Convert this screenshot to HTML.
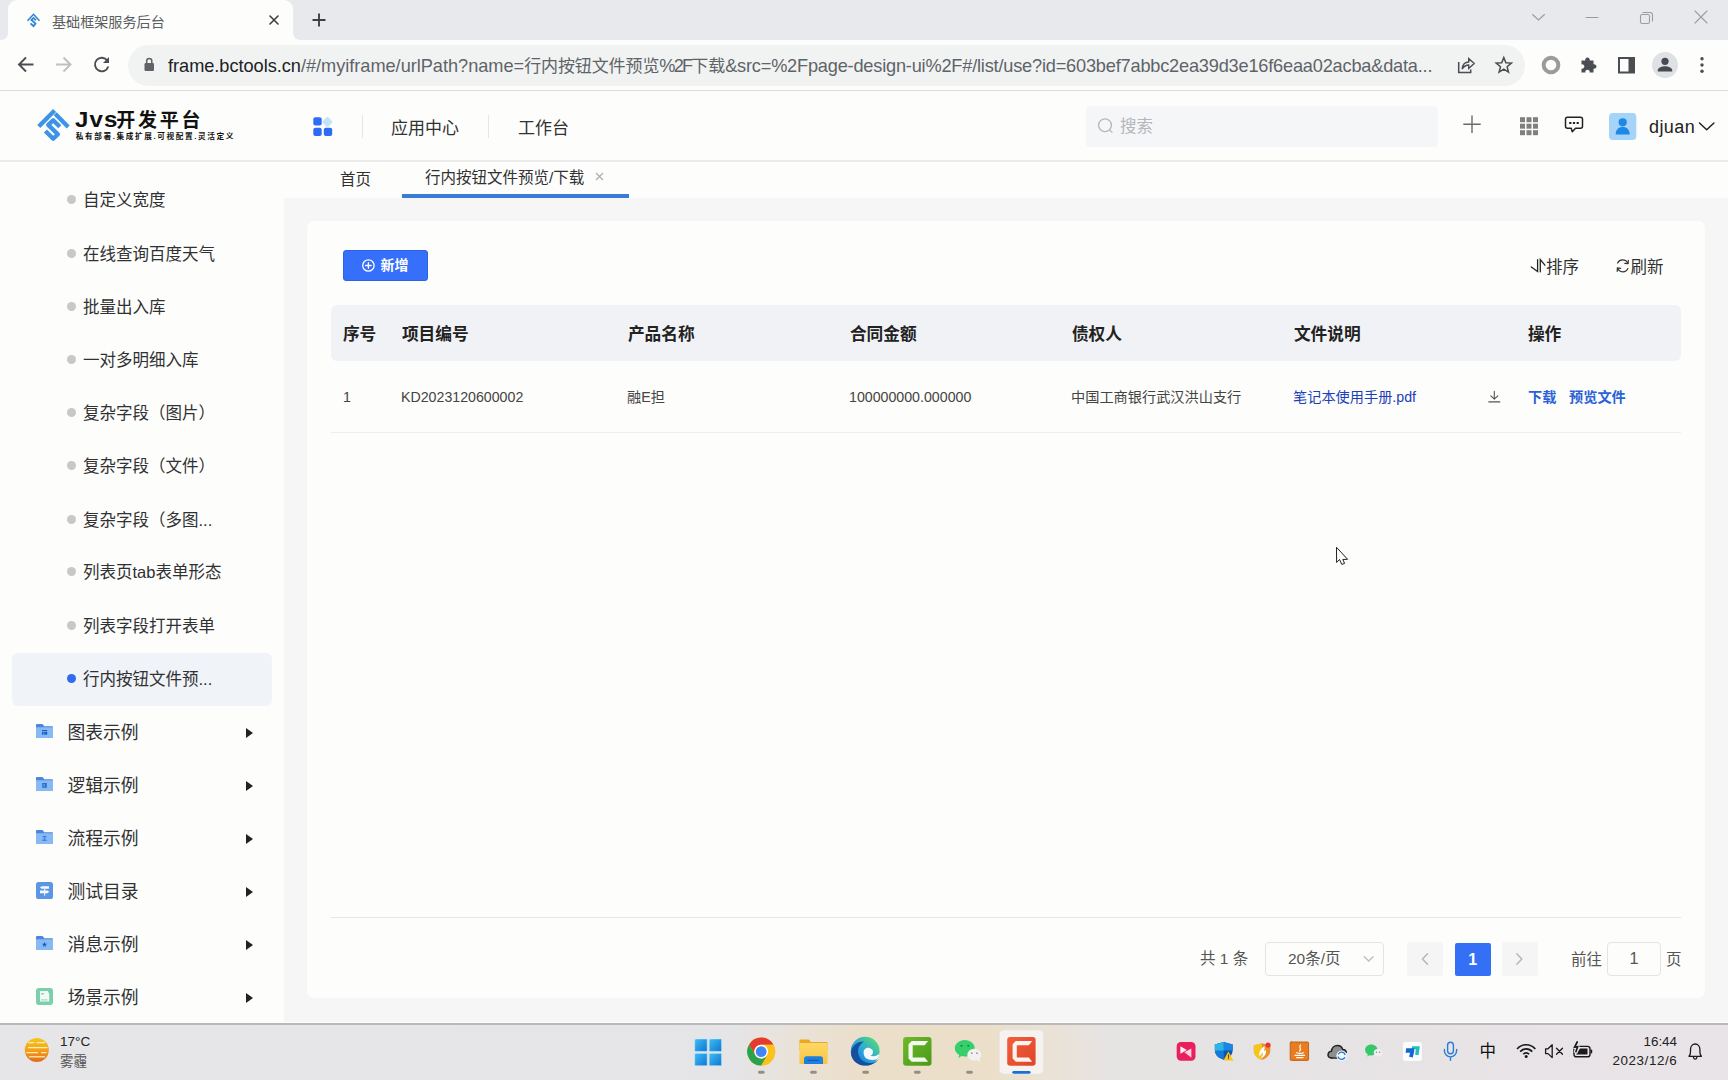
<!DOCTYPE html>
<html lang="zh-CN">
<head>
<meta charset="utf-8">
<title>基础框架服务后台</title>
<style>
*{box-sizing:border-box;margin:0;padding:0}
html,body{width:1728px;height:1080px;overflow:hidden;background:#fdfdfb;font-family:"Liberation Sans","Noto Sans CJK SC",sans-serif;color:#333}
.abs{position:absolute}
#root{position:relative;width:1728px;height:1080px;overflow:hidden}
/* chrome */
#tabstrip{left:0;top:0;width:1728px;height:40px;background:#e8e9ed}
#tab{left:8px;top:0;width:285px;height:41px;background:#fdfdfb;border-radius:9px 9px 0 0}
#tabtitle{left:52px;top:10.5px;font-size:14.1px;color:#5b5e62;white-space:nowrap;letter-spacing:0}
#toolbar{left:0;top:40px;width:1728px;height:51px;background:#fdfdfb;border-bottom:1px solid #dcdcdc}
#omni{left:128px;top:45px;width:1397px;height:41px;border-radius:20.5px;background:#f1f3f3}
#url{left:168px;top:55px;font-size:18.2px;color:#5f6368;white-space:nowrap;letter-spacing:-.03px;line-height:22px}
#url .p{letter-spacing:-1.8px}
#url .r{letter-spacing:-.2px}
#url .c{font-size:17px;letter-spacing:-.1px}
#url .d{color:#202124}
/* app header */
#apphead{left:0;top:91px;width:1728px;height:71px;background:#fdfdfb;border-bottom:2px solid #ebebeb}
.nav{top:116.6px;font-size:17px;color:#303133;white-space:nowrap;line-height:24px}
.vsep{top:115px;width:1px;height:23px;background:#e6e6e6}
#search{left:1086px;top:106px;width:352px;height:41px;background:#f5f6f7;border-radius:4px}
#search span{position:absolute;left:34px;top:9px;font-size:16.5px;color:#b4b7bd;line-height:22px}
#user{left:1649px;top:115px;font-size:18px;color:#222;line-height:24px;letter-spacing:.4px}
/* sidebar */
#side{left:0;top:162px;width:284px;height:861px;background:#fdfdfb}
.mi{left:83px;font-size:16.5px;color:#303133;white-space:nowrap;line-height:24px}
.dot{left:67px;width:9px;height:9px;border-radius:50%;background:#c8c8c8}
.grp{left:67.4px;font-size:17.8px;color:#303133;white-space:nowrap;line-height:24px}
.arrow{left:246px;width:0;height:0;border-left:7px solid #222;border-top:5px solid transparent;border-bottom:5px solid transparent}
#active{left:12px;top:653px;width:260px;height:52.5px;background:#f0f3f8;border-radius:6px}
/* main */
#main{left:284px;top:198px;width:1444px;height:823.5px;background:#f6f6f6}
#tabsbar{left:284px;top:162px;width:1444px;height:36px;background:#fdfdfb}
#card{left:307px;top:221px;width:1398px;height:777.3px;background:#fdfdfb;border-radius:7px}
#addbtn{left:343px;top:250px;width:84.5px;height:31px;background:#356ffa;border:1px solid #2c62e4;border-radius:3px;color:#fff;font-weight:bold;font-size:14px}
#thead{left:331px;top:305px;width:1350px;height:56px;background:#f1f2f5;border-radius:6px}
.th{margin-left:.9px;top:323.5px;font-size:16.7px;font-weight:bold;color:#222;white-space:nowrap;line-height:22px}
.td{top:387px;font-size:14.2px;color:#444;white-space:nowrap;line-height:20px}
.link{color:#1c3fb8}
.op{color:#2a62d8;font-weight:bold}
.hline{height:1px;background:#ebebeb}
.pg{font-size:15.5px;color:#555;white-space:nowrap;line-height:22px}
/* taskbar */
#taskbar{left:0;top:1023px;width:1728px;height:57px;background:linear-gradient(90deg,#e6e6e9 0,#e5e4e6 735px,#e9e2d7 800px,#ecdfca 860px,#ecdfca 990px,#eae2d6 1050px,#e6e3e3 1110px,#e8e4e8 1728px);border-top:2px solid #b9b9bb}
.tb{font-size:13.5px;color:#222;white-space:nowrap;line-height:18px}
</style>
</head>
<body>
<div id="root">

<!-- ===== Browser chrome ===== -->
<div id="tabstrip" class="abs"></div>
<div id="tab" class="abs"></div>
<div id="tabtitle" class="abs">基础框架服务后台</div>
<div id="toolbar" class="abs"></div>
<div id="omni" class="abs"></div>
<div id="url" class="abs"><span class="d">frame.bctools.cn</span>/#/myiframe/urlPath?name=<span class="c">行内按钮文件预览</span><span class="p">%2F</span><span class="c">下载</span><span class="r">&amp;src=%2Fpage-design-ui%2F#/list/use?id=603bef7abbc2ea39d3e16f6eaa02acba&amp;data...</span></div>


<svg class="abs" style="left:0;top:0" width="1728" height="91" viewBox="0 0 1728 91" fill="none" stroke-linecap="round" stroke-linejoin="round">
<!-- tab curves -->
<path d="M0 40 Q8 40 8 32 L8 40Z" fill="#fdfdfb" stroke="none"/>
<path d="M301 40 Q293 40 293 32 L293 40Z" fill="#fdfdfb" stroke="none"/>
<!-- favicon -->
<g stroke="#2f86d6" stroke-linecap="butt" stroke-linejoin="miter">
<path d="M27.5 20.7 L33.5 14.3 L39.5 20.7" stroke-width="1.6"/>
<path d="M35.9 20.3 L33.5 17.9 L31.4 20 L35.5 23.6 L33.5 26.1 L30.5 23.3" stroke-width="1.8"/>
</g>
<!-- tab close -->
<path d="M270 16 L278 24 M278 16 L270 24" stroke="#3c4043" stroke-width="1.6"/>
<!-- new tab -->
<path d="M312.5 20 H325.5 M319 13.5 V26.5" stroke="#3c4043" stroke-width="1.9" stroke-linecap="butt"/>
<!-- window controls -->
<path d="M1532.5 14.5 L1538.5 20 L1544.5 14.5" stroke="#9a9da2" stroke-width="1.1"/>
<path d="M1586 17.5 H1598" stroke="#9a9da2" stroke-width="1.1"/>
<rect x="1640.5" y="14.5" width="9" height="9" rx="1.8" stroke="#9a9da2" stroke-width="1.1"/>
<path d="M1643 12.5 H1650 Q1652.5 12.5 1652.5 15 V21" stroke="#9a9da2" stroke-width="1.1"/>
<path d="M1695 11 L1707 23 M1707 11 L1695 23" stroke="#9a9da2" stroke-width="1.1"/>
<!-- back -->
<path d="M33.5 64.5 H19.5 M26 57.5 L19 64.5 L26 71.5" stroke="#4a4d51" stroke-width="1.9" stroke-linecap="butt" stroke-linejoin="miter"/>
<!-- forward -->
<path d="M56 64.5 H70 M63.5 57.5 L70.5 64.5 L63.5 71.5" stroke="#bdc1c6" stroke-width="1.9" stroke-linecap="butt" stroke-linejoin="miter"/>
<!-- reload -->
<path d="M107.3 60.5 A6.8 6.8 0 1 0 108.3 66.5" stroke="#4a4d51" stroke-width="1.9" stroke-linecap="butt"/>
<path d="M109 57 V63 H103 Z" fill="#4a4d51" stroke="none"/>
<!-- lock -->
<rect x="144.5" y="63" width="9.5" height="8" rx="1.2" fill="#5f6368" stroke="none"/>
<path d="M146.7 63 V61 A2.550 2.550 0 0 1 151.8 61 V63" stroke="#5f6368" stroke-width="1.5"/>
<!-- share -->
<g transform="translate(-1.3 0)"><path d="M1460 62 V72.5 H1472 V69.5" stroke="#4a4d51" stroke-width="1.5" stroke-linejoin="miter" stroke-linecap="butt"/>
<path d="M1463.5 69 C1464 64 1467 62 1470 62 V58.5 L1475.5 63.5 L1470 68.5 V65 C1467.5 65 1465.5 66 1463.5 69Z" stroke="#4a4d51" stroke-width="1.4" stroke-linejoin="miter"/></g>
<!-- star -->
<path d="M1503.8 57.6 L1505.9 62.8 L1511.4 63.1 L1507.1 66.7 L1508.5 72.1 L1503.8 69.1 L1499.1 72.1 L1500.5 66.7 L1496.2 63.1 L1501.7 62.8 Z" stroke="#4a4d51" stroke-width="1.5" stroke-linejoin="miter"/>
<!-- ext ring -->
<circle cx="1551" cy="65" r="7.3" stroke="#9b9b9b" stroke-width="4"/>
<!-- puzzle -->
<path d="M1581.5 60.5 H1585.3 A2.3 2.3 0 1 1 1589.7 60.5 H1593.5 V64.3 A2.3 2.3 0 1 1 1593.5 68.7 V72.5 H1589.6 A2.2 2.2 0 1 0 1585.4 72.5 H1581.5 V68.6 A2.2 2.2 0 1 0 1581.5 64.4 Z" fill="#4a4d51" stroke="none"/>
<!-- side panel -->
<rect x="1619" y="58" width="15" height="14.5" stroke="#4a4d51" stroke-width="2" stroke-linejoin="miter"/>
<rect x="1628.5" y="58" width="5.5" height="14.5" fill="#4a4d51" stroke="none"/>
<!-- profile -->
<circle cx="1665" cy="65" r="13" fill="#dfe1e5" stroke="none"/>
<circle cx="1665" cy="61.3" r="3.6" fill="#454a54" stroke="none"/>
<path d="M1657.8 71.5 V70.3 C1657.8 67.6 1662.5 66.3 1665 66.3 C1667.5 66.3 1672.2 67.6 1672.2 70.3 V71.5 Z" fill="#454a54" stroke="none"/>
<!-- menu -->
<circle cx="1702" cy="58.7" r="1.7" fill="#4a4d51" stroke="none"/>
<circle cx="1702" cy="65" r="1.7" fill="#4a4d51" stroke="none"/>
<circle cx="1702" cy="71.3" r="1.7" fill="#4a4d51" stroke="none"/>
</svg>

<!-- ===== App header ===== -->
<div id="apphead" class="abs"></div>
<div class="abs nav" style="left:391px">应用中心</div>
<div class="abs nav" style="left:518px">工作台</div>
<div class="abs vsep" style="left:362px"></div>
<div class="abs vsep" style="left:488px"></div>
<div id="search" class="abs"><span>搜索</span></div>
<div id="user" class="abs">djuan</div>


<svg class="abs" style="left:0;top:91px" width="1728" height="70" viewBox="0 91 1728 70" fill="none">
<!-- logo -->
<g stroke="#3d93e8" stroke-width="4.3" stroke-linejoin="round" stroke-linecap="butt">
<path d="M38.8 126.6 L54.6 110.4"/>
<path d="M55.2 113.8 L68.2 126.9"/>
<path d="M59.8 126.8 L53.2 120.2 L48.2 124.9 L57.9 134.2 L53.2 138.7 L45.4 131"/>
</g>
<!-- app grid -->
<rect x="313.3" y="117.2" width="8.4" height="8.4" rx="2" fill="#2f6cf6"/>
<rect x="313.3" y="127.8" width="8.4" height="8.2" rx="2" fill="#2f6cf6"/>
<rect x="323.8" y="127.8" width="8.4" height="8.2" rx="2" fill="#2f6cf6"/>
<rect x="323.4" y="117.9" width="8" height="8" rx="2" fill="#c6e2f8" transform="rotate(45 327.4 121.9)"/>
<!-- search icon -->
<circle cx="1105" cy="125.2" r="6.4" stroke="#b4b7bd" stroke-width="1.3"/>
<path d="M1109.6 129.9 L1112 132.4" stroke="#b4b7bd" stroke-width="1.3" stroke-linecap="round"/>
<!-- plus -->
<path d="M1463.3 124.2 H1480.7 M1472 115.5 V132.9" stroke="#6b6b6b" stroke-width="1.4"/>
<!-- 3x3 grid -->
<g fill="#808080">
<rect x="1520" y="117.2" width="5" height="5"/><rect x="1526.5" y="117.2" width="5" height="5"/><rect x="1533" y="117.2" width="5" height="5"/>
<rect x="1520" y="123.7" width="5" height="5"/><rect x="1526.5" y="123.7" width="5" height="5"/><rect x="1533" y="123.7" width="5" height="5"/>
<rect x="1520" y="130.2" width="5" height="5"/><rect x="1526.5" y="130.2" width="5" height="5"/><rect x="1533" y="130.2" width="5" height="5"/>
</g>
<!-- chat -->
<path d="M1567.5 117.3 H1580.5 Q1582.5 117.3 1582.5 119.3 V126.3 Q1582.5 128.3 1580.5 128.3 H1575.5 L1572.3 131.8 L1571.2 128.3 H1567.5 Q1565.5 128.3 1565.5 126.3 V119.3 Q1565.5 117.3 1567.5 117.3 Z" stroke="#222" stroke-width="1.5" stroke-linejoin="round"/>
<rect x="1569.2" y="122" width="2.2" height="2" fill="#222"/><rect x="1572.9" y="122" width="2.2" height="2" fill="#222"/><rect x="1576.6" y="122" width="2.2" height="2" fill="#222"/>
<!-- avatar -->
<rect x="1609" y="113" width="27.3" height="27" rx="4" fill="#a6d3f8"/>
<circle cx="1622.7" cy="122.3" r="4.1" fill="#1e88e5"/>
<path d="M1615.7 134.5 C1615.7 129.5 1618.5 127 1622.7 127 C1626.9 127 1629.7 129.5 1629.7 134.5 Z" fill="#1e88e5"/>
<!-- chevron -->
<path d="M1699.5 123 L1706.7 129.8 L1713.9 123" stroke="#222" stroke-width="1.5" stroke-linecap="round" stroke-linejoin="round"/>
</svg>
<div class="abs" style="left:75.3px;top:106.6px;font-weight:bold;white-space:nowrap;line-height:26px;color:#111;font-size:21.5px;letter-spacing:1px;transform:scaleX(1.12);transform-origin:0 0">Jvs</div>
<div class="abs" style="left:116.3px;top:107.6px;font-weight:bold;white-space:nowrap;line-height:26px;color:#111;font-size:19px;letter-spacing:2.7px">开发平台</div>
<div class="abs" style="left:75.8px;top:130.6px;font-weight:bold;white-space:nowrap;line-height:12px;font-size:7.6px;letter-spacing:1.65px;color:#111">私有部署.集成扩展.可视配置.灵活定义</div>

<!-- ===== Sidebar ===== -->
<div id="side" class="abs"></div>
<div id="active" class="abs"></div>
<div class="abs dot" style="top:195px;background:#c8c8c8"></div><div class="abs mi" style="top:188px">自定义宽度</div>
<div class="abs dot" style="top:249px;background:#c8c8c8"></div><div class="abs mi" style="top:242px">在线查询百度天气</div>
<div class="abs dot" style="top:302px;background:#c8c8c8"></div><div class="abs mi" style="top:295px">批量出入库</div>
<div class="abs dot" style="top:355px;background:#c8c8c8"></div><div class="abs mi" style="top:348px">一对多明细入库</div>
<div class="abs dot" style="top:408px;background:#c8c8c8"></div><div class="abs mi" style="top:401px">复杂字段（图片）</div>
<div class="abs dot" style="top:461px;background:#c8c8c8"></div><div class="abs mi" style="top:454px">复杂字段（文件）</div>
<div class="abs dot" style="top:515px;background:#c8c8c8"></div><div class="abs mi" style="top:508px">复杂字段（多图...</div>
<div class="abs dot" style="top:567px;background:#c8c8c8"></div><div class="abs mi" style="top:560px">列表页tab表单形态</div>
<div class="abs dot" style="top:621px;background:#c8c8c8"></div><div class="abs mi" style="top:614px">列表字段打开表单</div>
<div class="abs dot" style="top:674px;background:#2f6bef"></div><div class="abs mi" style="top:667px">行内按钮文件预...</div>
<div class="abs grp" style="top:721px">图表示例</div><div class="abs arrow" style="top:728px"></div>
<div class="abs grp" style="top:774px">逻辑示例</div><div class="abs arrow" style="top:781px"></div>
<div class="abs grp" style="top:827px">流程示例</div><div class="abs arrow" style="top:834px"></div>
<div class="abs grp" style="top:880px">测试目录</div><div class="abs arrow" style="top:887px"></div>
<div class="abs grp" style="top:933px">消息示例</div><div class="abs arrow" style="top:940px"></div>
<div class="abs grp" style="top:986px">场景示例</div><div class="abs arrow" style="top:993px"></div>

<svg class="abs" style="left:0;top:700px" width="284" height="323" viewBox="0 700 284 323" fill="none">
<path d="M36 725 Q36 724 37 724 H42 Q42.8 724 43.2 724.8 L44.2 726.2 H52 Q53 726.2 53 727.2 V737 Q53 738 52 738 H37 Q36 738 36 737 Z" fill="#4a86dc"/><path d="M36 727.2 H53 V737 Q53 738 52 738 H37 Q36 738 36 737 Z" fill="#88b9f5"/><rect x="42" y="730" width="5.2" height="1.3" fill="#1b62c4"/><rect x="42" y="732" width="1.6" height="2.7" fill="#1b62c4"/><rect x="44.2" y="732" width="3" height="2.7" fill="#1b62c4"/>
<path d="M36 778 Q36 777 37 777 H42 Q42.8 777 43.2 777.8 L44.2 779.2 H52 Q53 779.2 53 780.2 V790 Q53 791 52 791 H37 Q36 791 36 790 Z" fill="#4a86dc"/><path d="M36 780.2 H53 V790 Q53 791 52 791 H37 Q36 791 36 790 Z" fill="#88b9f5"/><rect x="42.2" y="783" width="4.6" height="4.8" fill="#2a6fd0"/><rect x="43.6" y="784.2" width="1" height="2.4" fill="#88b9f5"/>
<path d="M36 831 Q36 830 37 830 H42 Q42.8 830 43.2 830.8 L44.2 832.2 H52 Q53 832.2 53 833.2 V843 Q53 844 52 844 H37 Q36 844 36 843 Z" fill="#4a86dc"/><path d="M36 833.2 H53 V843 Q53 844 52 844 H37 Q36 844 36 843 Z" fill="#88b9f5"/><rect x="42.6" y="836" width="3.8" height="1.2" fill="#3c7bd8"/><rect x="43.8" y="837.2" width="1.4" height="2.4" fill="#3c7bd8"/><rect x="42.2" y="839.6" width="4.6" height="1.2" fill="#3c7bd8"/>
<rect x="36" y="882" width="17" height="17" rx="2.6" fill="#5c96e3"/><path d="M41.6 886.2 H49 V888.8 H41.6 L40 887.5 Z M40 890.4 H47.6 L49.2 891.8 L47.6 893.2 H40 Z" fill="#f4fbff"/><rect x="44.2" y="888.5" width="1" height="7.2" fill="#f4fbff"/>
<path d="M36 937 Q36 936 37 936 H42 Q42.8 936 43.2 936.8 L44.2 938.2 H52 Q53 938.2 53 939.2 V949 Q53 950 52 950 H37 Q36 950 36 949 Z" fill="#4a86dc"/><path d="M36 939.2 H53 V949 Q53 950 52 950 H37 Q36 950 36 949 Z" fill="#88b9f5"/><polygon points="44.50,941.70 45.21,943.63 47.26,943.70 45.64,944.97 46.20,946.95 44.50,945.80 42.80,946.95 43.36,944.97 41.74,943.70 43.79,943.63" fill="#1b62c4"/>
<rect x="36" y="988" width="17" height="17" rx="3" fill="#7ccfab"/><path d="M40 991 H47.8 L49.2 994 V1001.6 H40 Z" fill="#effdf8"/><rect x="41.2" y="993" width="2.6" height="1.5" fill="#a8b8b2"/><rect x="41" y="999.3" width="6.5" height="1.2" fill="#b5d2c6"/>
</svg>
<!-- ===== Main ===== -->
<div id="tabsbar" class="abs"></div>
<div id="main" class="abs"></div>
<div id="card" class="abs"></div>
<div id="thead" class="abs"></div>

<div class="abs" style="left:340px;top:169.2px;font-size:15.5px;color:#303133;line-height:22px;white-space:nowrap">首页</div>
<div class="abs" style="left:425px;top:167.2px;font-size:15.5px;color:#303133;line-height:22px;white-space:nowrap">行内按钮文件预览/下载</div>
<svg class="abs" style="left:595px;top:172.4px" width="9" height="9" viewBox="0 0 9 9"><path d="M1 1 L8 8 M8 1 L1 8" stroke="#a8abb2" stroke-width="1.1"/></svg>
<div class="abs" style="left:402px;top:194px;width:227px;height:4px;background:#3a7bd8"></div>

<div id="addbtn" class="abs"><span style="position:absolute;left:36.5px;top:5px;line-height:19px">新增</span></div>
<div class="abs" style="left:1546px;top:256px;font-size:16.5px;color:#303133;line-height:22px;white-space:nowrap">排序</div>
<div class="abs" style="left:1630.5px;top:256px;font-size:16.5px;color:#303133;line-height:22px;white-space:nowrap">刷新</div>
<div class="abs th" style="left:342px">序号</div>
<div class="abs th" style="left:401px">项目编号</div>
<div class="abs th" style="left:627px">产品名称</div>
<div class="abs th" style="left:849px">合同金额</div>
<div class="abs th" style="left:1071px">债权人</div>
<div class="abs th" style="left:1293px">文件说明</div>
<div class="abs th" style="left:1527px">操作</div>
<div class="abs td" style="left:343px">1</div>
<div class="abs td" style="left:401px">KD2023120600002</div>
<div class="abs td" style="left:627px">融E担</div>
<div class="abs td" style="left:849px">100000000.000000</div>
<div class="abs td" style="left:1071px">中国工商银行武汉洪山支行</div>
<div class="abs td link" style="left:1293px">笔记本使用手册.pdf</div>
<div class="abs td op" style="left:1528px">下载</div>
<div class="abs td op" style="left:1569px">预览文件</div>
<div class="abs hline" style="left:331px;top:432px;width:1350px;background:#eee"></div>
<div class="abs hline" style="left:331px;top:917px;width:1350px;background:#e6e6e6"></div>
<div class="abs pg" style="left:1200px;top:948px">共 1 条</div>
<div class="abs" style="left:1265px;top:942px;width:119px;height:34px;border:1px solid #e4e4e4;border-radius:4px"></div>
<div class="abs pg" style="left:1288px;top:948px">20条/页</div>
<div class="abs" style="left:1407px;top:942px;width:36px;height:34px;background:#f5f5f5;border-radius:3px"></div>
<div class="abs" style="left:1455px;top:942.5px;width:35.5px;height:33px;background:#3370f6;border-radius:2px;color:#fff;font-weight:bold;font-size:16px;text-align:center;line-height:33px">1</div>
<div class="abs" style="left:1502px;top:942px;width:36px;height:34px;background:#f5f5f5;border-radius:3px"></div>
<div class="abs pg" style="left:1571px;top:949px">前往</div>
<div class="abs" style="left:1607px;top:942px;width:54px;height:34px;border:1px solid #e4e4e4;border-radius:4px;text-align:center;line-height:32px;font-size:16px;color:#555">1</div>
<div class="abs pg" style="left:1666px;top:949px">页</div>

<svg class="abs" style="left:307px;top:221px" width="1397" height="778" viewBox="307 221 1397 778" fill="none" stroke-linecap="round" stroke-linejoin="round">
<!-- add icon -->
<circle cx="368.4" cy="265.5" r="5.7" stroke="#fff" stroke-width="1.3"/>
<path d="M365.6 265.5 H371.2 M368.4 262.7 V268.3" stroke="#fff" stroke-width="1.3"/>
<!-- sort -->
<path d="M1537.6 259.6 V271.5 L1531.3 267 M1540.3 271.8 V259.6 L1544.9 265.2" stroke="#222" stroke-width="1.3" stroke-linejoin="miter"/>
<!-- refresh -->
<path d="M1627.8 263.3 A5.6 5.6 0 0 0 1617.6 263" stroke="#333" stroke-width="1.2"/>
<path d="M1617.6 268.3 A5.6 5.6 0 0 0 1627.9 268.5" stroke="#333" stroke-width="1.2"/>
<path d="M1628.3 260.3 L1628.1 263.7 L1624.8 263.3" stroke="#333" stroke-width="1.2"/>
<path d="M1617.2 271.3 L1617.4 267.9 L1620.7 268.3" stroke="#333" stroke-width="1.2"/>
<!-- download -->
<path d="M1494.3 391.3 V399 M1490.8 395.8 L1494.3 399.2 L1497.8 395.8 M1488.8 401.9 H1499.8" stroke="#555" stroke-width="1.1"/>
<!-- select chevron -->
<path d="M1364.3 956.8 L1368.7 961 L1373.1 956.8" stroke="#b9bcc2" stroke-width="1.3"/>
<!-- prev / next -->
<path d="M1427.5 953.8 L1422.5 959 L1427.5 964.2" stroke="#b4b6ba" stroke-width="1.5"/>
<path d="M1516.8 953.8 L1521.8 959 L1516.8 964.2" stroke="#b4b6ba" stroke-width="1.5"/>
</svg>
<svg class="abs" style="left:1330px;top:540px" width="24" height="30" viewBox="1330 540 24 30"><path d="M1336.5 547.3 L1336.6 562.5 L1339.5 559.5 L1341.8 564.4 L1344.6 563.4 L1342.8 559.5 L1347.6 559.3 Z" fill="#fdfdfb" stroke="#222" stroke-width="1" stroke-linejoin="round"/></svg>
<!-- ===== Taskbar ===== -->
<div id="taskbar" class="abs"></div>

<svg class="abs" style="left:0;top:1023px" width="1728" height="57" viewBox="0 1023 1728 57" fill="none" stroke-linecap="round" stroke-linejoin="round">
<defs><linearGradient id="gw" x1="0" y1="0" x2="1" y2="1"><stop offset="0" stop-color="#3fbdf2"/><stop offset="1" stop-color="#0f76d4"/></linearGradient><linearGradient id="gsun" x1="0" y1="0" x2="0" y2="1"><stop offset="0" stop-color="#f6c81c"/><stop offset=".5" stop-color="#f3a01c"/><stop offset="1" stop-color="#e6681c"/></linearGradient><linearGradient id="gfold" x1="0" y1="0" x2="0" y2="1"><stop offset="0" stop-color="#fdd867"/><stop offset="1" stop-color="#f8c440"/></linearGradient><linearGradient id="gedge" x1="0" y1="1" x2="1" y2="0"><stop offset="0" stop-color="#1466c4"/><stop offset=".45" stop-color="#2aa3e0"/><stop offset=".85" stop-color="#4fd482"/><stop offset="1" stop-color="#5bd970"/></linearGradient></defs>
<circle cx="36.8" cy="1050" r="12" fill="url(#gsun)"/><g stroke="#fdeeb0" stroke-width="1.3" stroke-linecap="butt"><path d="M28.5 1042.6 H34.5 M36.5 1042.6 H45"/><path d="M28 1047.6 H47.5"/><path d="M26.5 1052.7 H38 M41 1052.7 H46.5"/><path d="M29 1056.8 H45"/></g>
<g fill="url(#gw)" stroke="#c4ebfb" stroke-width=".6"><rect x="694.7" y="1038.9" width="12.5" height="12.5" rx=".8"/><rect x="709.1" y="1038.9" width="12.5" height="12.5" rx=".8"/><rect x="694.7" y="1053.3" width="12.5" height="12.5" rx=".8"/><rect x="709.1" y="1053.3" width="12.5" height="12.5" rx=".8"/></g>
<g transform="translate(761.2 1051.6)"><circle r="14" fill="#fbc116"/><path d="M0 -6.90 L12.18 -6.90 A14 14 0 0 0 -12.07 -7.10 L-5.98 3.45 A6.9 6.9 0 0 1 0 -6.90 Z" fill="#e33b2e"/><path d="M0 -6.90 L12.18 -6.90 A14 14 0 0 0 -12.07 -7.10 L-5.98 3.45 A6.9 6.9 0 0 1 0 -6.90 Z" fill="#fcc21b" transform="rotate(120)"/><path d="M0 -6.90 L12.18 -6.90 A14 14 0 0 0 -12.07 -7.10 L-5.98 3.45 A6.9 6.9 0 0 1 0 -6.90 Z" fill="#2ba24c" transform="rotate(240)"/><circle r="6.9" fill="#fff"/><circle r="5.4" fill="#4285f4"/></g>
<path d="M799.4 1041 Q799.4 1039.6 800.8 1039.6 H808 Q809.2 1039.6 809.8 1040.6 L810.6 1041.9 H826.2 Q827.6 1041.9 827.6 1043.3 V1050 H799.4 Z" fill="#e9a820"/><rect x="799.4" y="1043" width="28.2" height="21.1" rx="1.4" fill="url(#gfold)"/><path d="M804 1064.1 V1059 Q804 1056.2 806.8 1056.2 H820.2 Q823 1056.2 823 1059 V1064.1 Z" fill="#1e7fde"/><path d="M808 1060.4 H818.3" stroke="#125db0" stroke-width="1.3"/>
<circle cx="865.2" cy="1051.2" r="14.4" fill="url(#gedge)"/><path d="M851 1053.5 C851.5 1046 857 1041.5 864 1041.5 C860 1044 857.5 1048 858.2 1053 C859 1059 864 1063.5 871 1063 C874 1062.8 876.5 1061.5 878.2 1059.5 C875.5 1063.5 870.5 1065.6 865.2 1065.6 C858 1065.6 851.5 1060.5 851 1053.5 Z" fill="#14509e"/><path d="M863.6 1052.6 C863.6 1049.4 866.3 1047.4 869.3 1047.9 C872 1048.4 873.5 1050.6 872.9 1052.9 C872.5 1054.3 871.5 1055.1 870.6 1055.7 C873.5 1056.8 877.3 1056 879.3 1053.8 C879.3 1056.3 878.3 1058 876.8 1059.2 C872.8 1060.6 867.3 1060.1 865 1057.2 C864 1055.9 863.6 1054.3 863.6 1052.6 Z" fill="#f4f8fb"/>
<linearGradient id="gcg" x1="0" y1="0" x2="1" y2="1"><stop offset="0" stop-color="#6fb92a"/><stop offset="1" stop-color="#4a9a18"/></linearGradient><rect x="903.1" y="1036.9" width="28.4" height="28.8" rx="3" fill="url(#gcg)"/><path d="M911.7 1041.1000000000001 H928.1 L924.7 1045.3000000000002 H912.7 V1057.5 H924.7 L928.1 1061.7 H911.7 L908.5 1058.5 V1044.3000000000002 Z" fill="#fff" fill-opacity=".93"/>
<path d="M964.8 1039.9 C970.4 1039.9 974.8 1043.6 974.8 1048.2 C974.8 1052.8 970.4 1056.5 964.8 1056.5 C963.7 1056.5 962.6 1056.3 961.6 1056.1 L958.4 1058 L959.2 1054.9 C956.5 1053.4 954.8 1051 954.8 1048.2 C954.8 1043.6 959.2 1039.9 964.8 1039.9 Z" fill="#35d06c"/><circle cx="961.5" cy="1045.8" r="1.1" fill="#1b8a43"/><circle cx="968.3" cy="1045.8" r="1.1" fill="#1b8a43"/><ellipse cx="974.3" cy="1054.7" rx="7" ry="6" fill="#f3f1ef"/><path d="M977 1059.5 L980.2 1062 L979.5 1058.5 Z" fill="#f3f1ef"/><circle cx="971.8" cy="1053.2" r=".9" fill="#9a9a9a"/><circle cx="977" cy="1053.2" r=".9" fill="#9a9a9a"/>
<rect x="999.2" y="1029.8" width="44.5" height="44.5" rx="4.5" fill="#f5f2ef" stroke="#e3e0dc" stroke-width=".8"/>
<linearGradient id="gcr" x1="0" y1="0" x2="1" y2="1"><stop offset="0" stop-color="#f0603a"/><stop offset="1" stop-color="#df452a"/></linearGradient><rect x="1007.2" y="1036.9" width="28.4" height="28.8" rx="3" fill="url(#gcr)"/><path d="M1015.8000000000001 1041.1000000000001 H1032.2 L1028.8 1045.3000000000002 H1016.8000000000001 V1057.5 H1028.8 L1032.2 1061.7 H1015.8000000000001 L1012.6 1058.5 V1044.3000000000002 Z" fill="#fff" fill-opacity=".93"/>
<rect x="758.0" y="1070.8" width="6.6" height="2.9" rx="1.45" fill="#948f86"/><rect x="810.2" y="1070.8" width="6.6" height="2.9" rx="1.45" fill="#948f86"/><rect x="862.4000000000001" y="1070.8" width="6.6" height="2.9" rx="1.45" fill="#948f86"/><rect x="914.0" y="1070.8" width="6.6" height="2.9" rx="1.45" fill="#948f86"/><rect x="966.2" y="1070.8" width="6.6" height="2.9" rx="1.45" fill="#948f86"/><rect x="1012.3" y="1070.9" width="18.3" height="2.9" rx="1.450" fill="#1a6fd4"/>
<rect x="1176.7" y="1042" width="18.8" height="18.8" rx="4.2" fill="#e9205d"/><path d="M1180.4 1046.3 V1053.7 L1186.8 1050 Z" fill="#fff" fill-opacity=".95"/><path d="M1191.4 1048.6 V1057.7 L1184.4 1052.2 Z" fill="#fff" fill-opacity=".8"/>
<path d="M1223.8 1042 L1232.7 1044.6 V1050 C1232.7 1055 1228.8 1058.4 1223.8 1059.7 C1218.8 1058.4 1214.9 1055 1214.9 1050 V1044.6 Z" fill="#0f56a8"/><path d="M1223.8 1042 L1214.9 1044.6 V1050 C1214.9 1055 1218.8 1058.4 1223.8 1059.7 Z" fill="#1579d6"/><path d="M1214.9 1044.6 L1223.8 1042 V1050.6 H1214.9 Z" fill="#2cb5e8"/><path d="M1223.8 1042 L1232.7 1044.6 V1050.6 H1223.8 Z" fill="#1787e2"/><path d="M1228.4 1051.6 L1233.4 1060.6 H1223.4 Z" fill="#fcc419"/><rect x="1228" y="1054.6" width=".9" height="3.2" fill="#333"/><rect x="1228" y="1058.4" width=".9" height=".9" fill="#333"/>
<path d="M1262 1043.3 L1270.3 1045.6 V1050.5 C1270.3 1055 1266.6 1058.5 1262 1059.8 C1257.4 1058.5 1253.8 1055 1253.8 1050.5 V1045.6 Z" fill="#e9922c"/><path d="M1262 1043.3 L1253.8 1045.6 V1050.5 C1253.8 1055 1257.4 1058.5 1262 1059.8 Z" fill="#f6c51c"/><path d="M1264.5 1046 C1261 1048.5 1258.5 1052 1259.5 1056.5 C1260.5 1054.5 1262 1053.5 1263 1052.5 C1262.8 1054.5 1262 1056.5 1261 1058.5 C1265 1056.5 1267 1053 1265.5 1049.5 C1265 1050.5 1264.5 1051 1263.8 1051.3 C1264.6 1049.5 1264.8 1047.8 1264.5 1046 Z" fill="#fff"/><circle cx="1268" cy="1045" r="2.6" fill="#e8372c"/>
<rect x="1290.2" y="1042" width="18.4" height="18.4" rx="1" fill="#ea7c20" stroke="#b95c12" stroke-width=".9"/><path d="M1295 1055.3 H1304.5 M1296.5 1057.6 H1303 M1300.5 1045 C1298 1047 1302.5 1048.5 1299.5 1051 M1296.5 1052.8 C1299 1053.6 1301.5 1053.6 1303.5 1052.8" stroke="#fff" stroke-width="1.2"/>
<path d="M1331.5 1058 C1328.5 1058 1327.6 1055.5 1328.2 1053.7 C1328.8 1052 1330.3 1051.3 1331.5 1051.3 C1331.8 1047.8 1334.3 1045.6 1337.3 1045.6 C1340 1045.6 1342 1047.2 1342.8 1049.5 C1344.6 1049.5 1346 1050.6 1346.3 1052.3" stroke="#222" stroke-width="1.5" fill="#8e8e90"/><path d="M1331.5 1058 H1337" stroke="#222" stroke-width="1.5"/><path d="M1330 1052.5 H1346 V1057 H1331 Z" fill="#8e8e90" stroke="none"/><circle cx="1341.6" cy="1055.8" r="5.2" fill="#f2f6fb"/><path d="M1345 1054.5 A3.6 3.6 0 0 0 1338.5 1054 M1338.2 1057 A3.6 3.6 0 0 0 1344.7 1057.7" stroke="#1a73d6" stroke-width="1.3"/>
<path d="M1371.3 1044.6 C1374.8 1044.6 1377.5 1047 1377.5 1050 C1377.5 1053 1374.8 1055.4 1371.3 1055.4 C1370.6 1055.4 1370 1055.3 1369.4 1055.2 L1367.3 1056.4 L1367.8 1054.4 C1366.2 1053.4 1365.1 1051.8 1365.1 1050 C1365.1 1047 1367.8 1044.6 1371.3 1044.6 Z" fill="#35c76a"/><ellipse cx="1378" cy="1052.8" rx="4.3" ry="3.7" fill="#efefef"/><circle cx="1376.5" cy="1052.3" r=".7" fill="#888"/><circle cx="1379.7" cy="1052.3" r=".7" fill="#888"/>
<rect x="1402.9" y="1042.1" width="19" height="18.9" rx="3" fill="#fbfcfd"/><path d="M1412.2 1046.3 H1419.8 L1418.6 1054.9 H1415.3 L1415.6 1049.1 H1411.8 Z" fill="#22c0b8"/><path d="M1406.2 1048.2 H1414.5 L1413.9 1052.7 L1412.8 1057.4 L1409.1 1056.8 L1410 1052.7 H1405.6 Z" fill="#1268d0"/>
<rect x="1447.6" y="1042.3" width="5.8" height="11.4" rx="2.9" stroke="#2b7cd3" stroke-width="1.4"/><path d="M1444.4 1049.5 V1050.8 A6.1 6.1 0 0 0 1456.6 1050.8 V1049.5 M1450.5 1057 V1060.3" stroke="#2b7cd3" stroke-width="1.4"/>
<path d="M1517.1 1049.0 A11.9 11.9 0 0 1 1535.3 1049.0 M1520.2 1051.6 A7.8 7.8 0 0 1 1532.2 1051.6 M1523.3 1054.2 A3.8 3.8 0 0 1 1529.1 1054.2" stroke="#1a1a1a" stroke-width="1.7" stroke-linecap="butt"/><circle cx="1526.2" cy="1056.3999999999999" r="1.5" fill="#1a1a1a"/>
<path d="M1545.6 1048.8 H1548 L1552.2 1044.8 V1057.6 L1548 1053.6 H1545.6 Z" stroke="#1a1a1a" stroke-width="1.3" stroke-linejoin="round"/><path d="M1556.5 1048.3 L1562.5 1054.3 M1562.5 1048.3 L1556.5 1054.3" stroke="#1a1a1a" stroke-width="1.3"/>
<rect x="1574" y="1046.4" width="16" height="10.4" rx="2.4" stroke="#1a1a1a" stroke-width="1.4"/><path d="M1580 1048.4 H1587.5 V1054.6 H1576 Z" fill="#1a1a1a"/><path d="M1591.4 1050.3 V1052.7" stroke="#1a1a1a" stroke-width="1.6"/><path d="M1577.2 1042 L1574.6 1047.1 L1577.6 1046.7 L1576 1051.6" stroke="#e7e5e9" stroke-width="4"/><path d="M1577.2 1042 L1574.6 1047.1 L1577.6 1046.7 L1576 1051.6" stroke="#1a1a1a" stroke-width="1.7" stroke-linejoin="miter"/>
<path d="M1689 1056.3 H1701.4 C1700.2 1055 1699.9 1053.8 1699.9 1052 V1049.5 C1699.9 1046.3 1697.9 1044 1695.2 1044 C1692.5 1044 1690.5 1046.3 1690.5 1049.5 V1052 C1690.5 1053.8 1690.2 1055 1689 1056.3 Z M1693.5 1057.4 C1693.7 1058.6 1694.3 1059.2 1695.2 1059.2 C1696.1 1059.2 1696.7 1058.6 1696.9 1057.4" stroke="#1a1a1a" stroke-width="1.3"/>
</svg>
<div class="abs tb" style="left:60px;top:1033px;font-size:13.5px">17°C</div>
<div class="abs tb" style="left:60px;top:1052.5px;font-size:13.5px;color:#555">雾霾</div>
<div class="abs tb" style="right:51px;top:1033.3px;font-size:13.4px;text-align:right">16:44</div>
<div class="abs tb" style="right:50.6px;top:1052px;font-size:13.4px;letter-spacing:.6px;text-align:right">2023/12/6</div>
<div class="abs tb" style="left:1479.5px;top:1041px;font-size:16.5px;line-height:20px;color:#111">中</div>

</div>
</body>
</html>
